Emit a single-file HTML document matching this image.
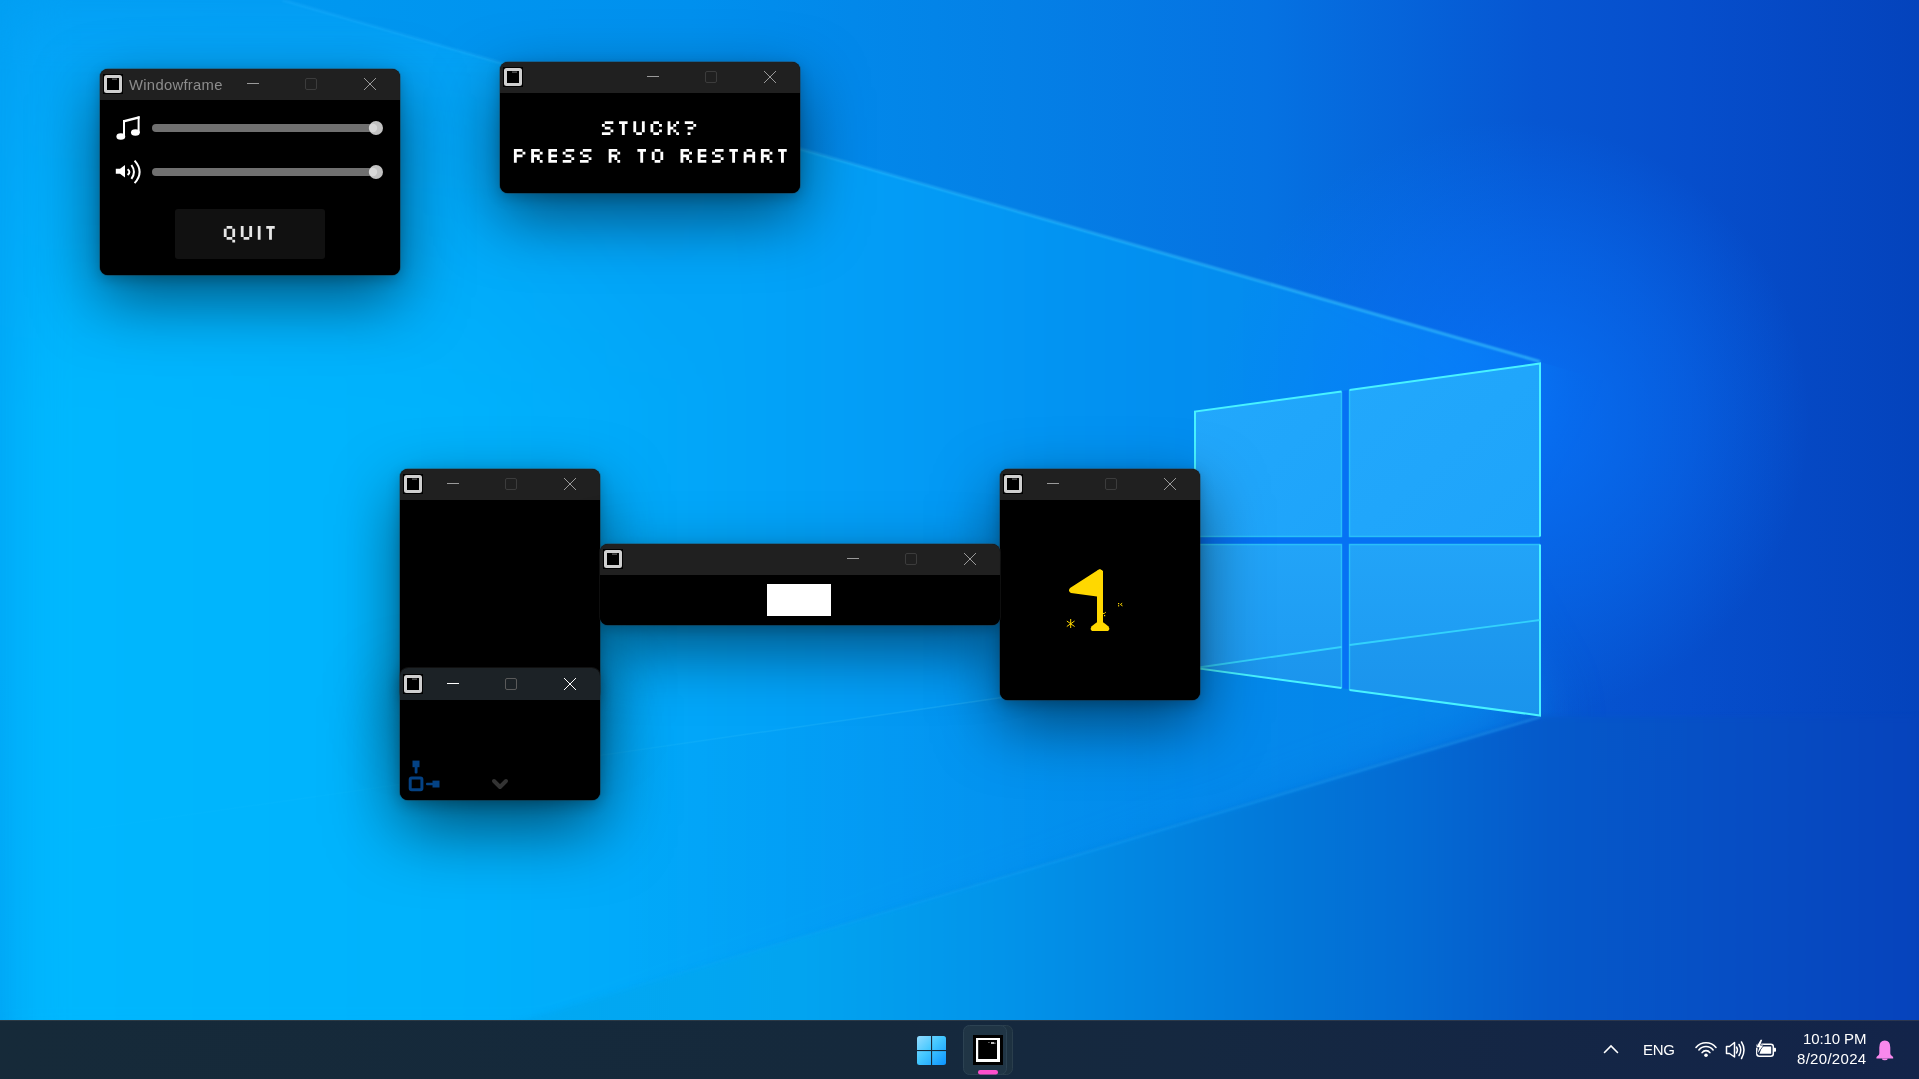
<!DOCTYPE html>
<html><head><meta charset="utf-8">
<style>
html,body{margin:0;padding:0;width:1919px;height:1079px;overflow:hidden;background:#0090e8;font-family:"Liberation Sans",sans-serif;}
.wall{position:absolute;left:0;top:0;}
.win{position:absolute;border-radius:8px;overflow:hidden;background:#000;box-shadow:0 24px 64px rgba(0,0,0,0.50),0 4px 14px rgba(0,0,0,0.22),0 0 0 1px rgba(60,60,60,0.35);}
.act{box-shadow:0 26px 70px rgba(0,0,0,0.58),0 4px 16px rgba(0,0,0,0.28),0 0 0 1px rgba(60,60,60,0.35);}
.cap{display:block;will-change:transform;}
.client{position:relative;background:#000;}
.taskbar{position:absolute;left:0;top:1020px;width:1919px;height:59px;background:linear-gradient(90deg,#162a39 0%,#15293c 45%,#152840 62%,#142645 80%,#13244a 100%);border-top:1px solid rgba(90,90,90,0.35);box-sizing:border-box;}
.tb{position:absolute;color:#fff;font-size:13.5px;white-space:nowrap;will-change:transform;}
</style></head><body>
<svg class="wall" width="1919" height="1079" viewBox="0 0 1919 1079">
<defs>
 <linearGradient id="bgx" x1="0" y1="0" x2="1919" y2="0" gradientUnits="userSpaceOnUse">
  <stop offset="0" stop-color="#009ef2"/>
  <stop offset="0.36" stop-color="#0090ee"/>
  <stop offset="0.53" stop-color="#0480e6"/>
  <stop offset="0.66" stop-color="#0572e2"/>
  <stop offset="0.80" stop-color="#0656d2"/>
  <stop offset="0.88" stop-color="#064ecc"/>
  <stop offset="1" stop-color="#0443bc"/>
 </linearGradient>
 <linearGradient id="bgy" x1="0" y1="0" x2="0" y2="1079" gradientUnits="userSpaceOnUse">
  <stop offset="0" stop-color="#0040b0" stop-opacity="0"/>
  <stop offset="0.6" stop-color="#0040b0" stop-opacity="0"/>
  <stop offset="1" stop-color="#0030a0" stop-opacity="0.05"/>
 </linearGradient>
</defs>
<rect width="1919" height="1079" fill="url(#bgx)"/>
<rect width="1919" height="1079" fill="url(#bgy)"/>
</svg>
<div class="wall" style="width:1919px;height:1079px;clip-path:polygon(282px 0px, 1540px 362px, 1919px 471px, 1919px 1079px, 0px 1079px, 0px 0px)">
<svg width="1919" height="1079" viewBox="0 0 1919 1079" style="filter:blur(30px);display:block">
<defs>
 <linearGradient id="beamtop" x1="0" y1="0" x2="0" y2="400" gradientUnits="userSpaceOnUse">
  <stop offset="0" stop-color="#0890f0" stop-opacity="0.55"/>
  <stop offset="1" stop-color="#0890f0" stop-opacity="0"/>
 </linearGradient>
 <linearGradient id="beam" x1="0" y1="0" x2="1540" y2="0" gradientUnits="userSpaceOnUse">
  <stop offset="0" stop-color="#00b8fe"/>
  <stop offset="0.3" stop-color="#00b2fc"/>
  <stop offset="0.58" stop-color="#039cf6"/>
  <stop offset="0.75" stop-color="#028ff0"/>
  <stop offset="1" stop-color="#0784ec"/>
 </linearGradient>
</defs>
<polygon points="250,-300 1545,340 1440,540 1545,725 560,1079 -300,1379 -300,-300" fill="url(#beam)"/>
<rect x="-300" y="-300" width="1000" height="700" fill="url(#beamtop)"/>
</svg>
</div>
<svg class="wall" width="1919" height="1079" viewBox="0 0 1919 1079">
<defs>
 <linearGradient id="floorC" x1="0" y1="0" x2="1919" y2="0" gradientUnits="userSpaceOnUse">
  <stop offset="0" stop-color="#00b2f8"/>
  <stop offset="0.417" stop-color="#02a4f0"/>
  <stop offset="0.521" stop-color="#0294ea"/>
  <stop offset="0.677" stop-color="#0276d8"/>
  <stop offset="0.73" stop-color="#036cd4"/>
  <stop offset="0.808" stop-color="#0559ca"/>
  <stop offset="0.9" stop-color="#064ec4"/>
  <stop offset="1" stop-color="#0643bc"/>
 </linearGradient>
 <linearGradient id="lineC" x1="1540" y1="717" x2="500" y2="1027" gradientUnits="userSpaceOnUse">
  <stop offset="0" stop-color="#40c0ff" stop-opacity="0.35"/>
  <stop offset="1" stop-color="#40c0ff" stop-opacity="0"/>
 </linearGradient>
</defs>
</svg>
<svg class="wall" width="1919" height="1079" viewBox="0 0 1919 1079" style="filter:blur(2.5px)">
<polygon points="-20,1182 1540,717 1940,717 1940,1100 -20,1100" fill="url(#floorC)"/>
</svg>
<svg class="wall" width="1919" height="1079" viewBox="0 0 1919 1079" style="filter:blur(1px)">
<line x1="1540" y1="717" x2="500" y2="1027" stroke="url(#lineC)" stroke-width="2"/>
</svg>
<svg class="wall" width="1919" height="1079" viewBox="0 0 1919 1079">
<defs>
 <radialGradient id="glow" cx="1510" cy="420" r="300" gradientUnits="userSpaceOnUse">
  <stop offset="0" stop-color="#0878ff" stop-opacity="0.75"/>
  <stop offset="0.6" stop-color="#0878ff" stop-opacity="0.35"/>
  <stop offset="1" stop-color="#0878ff" stop-opacity="0"/>
 </radialGradient>
 <linearGradient id="floor" x1="0" y1="0" x2="1540" y2="0" gradientUnits="userSpaceOnUse">
  <stop offset="0" stop-color="#0050b0" stop-opacity="0"/>
  <stop offset="0.4" stop-color="#0050b0" stop-opacity="0.0"/>
  <stop offset="0.7" stop-color="#0050b0" stop-opacity="0.07"/>
  <stop offset="1" stop-color="#0050b0" stop-opacity="0.05"/>
 </linearGradient>
 <linearGradient id="lineA" x1="280" y1="0" x2="1540" y2="364" gradientUnits="userSpaceOnUse">
  <stop offset="0" stop-color="#40c8ff" stop-opacity="0.35"/>
  <stop offset="1" stop-color="#50d8ff" stop-opacity="0.8"/>
 </linearGradient>
 <linearGradient id="lineB" x1="0" y1="842" x2="1540" y2="620" gradientUnits="userSpaceOnUse">
  <stop offset="0" stop-color="#60e0ff" stop-opacity="0.0"/>
  <stop offset="0.4" stop-color="#60e0ff" stop-opacity="0.06"/>
  <stop offset="1" stop-color="#60e0ff" stop-opacity="0.35"/>
 </linearGradient>
</defs>
<rect width="1919" height="1079" fill="url(#glow)"/>
<polygon points="0,842 1540,620 1540,717 0,1176" fill="url(#floor)"/>
</svg>
<svg class="wall" width="1919" height="1079" viewBox="0 0 1919 1079" style="filter:blur(1.2px)">
<defs>
 <linearGradient id="lineA2" x1="280" y1="0" x2="1540" y2="364" gradientUnits="userSpaceOnUse">
  <stop offset="0" stop-color="#20b0ff" stop-opacity="0.45"/>
  <stop offset="1" stop-color="#40d0ff" stop-opacity="0.8"/>
 </linearGradient>
</defs>
<line x1="282" y1="0" x2="1540" y2="361.5" stroke="url(#lineA2)" stroke-width="2.2"/>
</svg>
<svg class="wall" width="1919" height="1079" viewBox="0 0 1919 1079">
<defs>
 <linearGradient id="pane" x1="0" y1="0" x2="1" y2="1">
  <stop offset="0" stop-color="#22a8fc"/>
  <stop offset="1" stop-color="#1ea4fa"/>
 </linearGradient>
 <linearGradient id="paneB" x1="0" y1="544" x2="0" y2="716" gradientUnits="userSpaceOnUse">
  <stop offset="0" stop-color="#22a4f8"/>
  <stop offset="1" stop-color="#1c98f0"/>
 </linearGradient>
</defs>
<line x1="0" y1="842" x2="1540" y2="620" stroke="url(#lineB)" stroke-width="1.5"/>
<polygon points="1195,411.5 1540,363.5 1540,715.5 1195,668" fill="#0672f4"/>
<g fill="url(#pane)">
 <polygon points="1195,411.5 1341.5,391.5 1341.5,536.5 1195,536.5"/>
 <polygon points="1349.5,390 1540,363.5 1540,536.5 1349.5,536.5"/>
</g>
<g fill="url(#paneB)">
 <polygon points="1195,544.5 1341.5,544.5 1341.5,688 1195,668"/>
 <polygon points="1349.5,544.5 1540,544.5 1540,715.5 1349.5,690"/>
</g>
<polygon points="1195,668 1341.5,647 1341.5,688" fill="#0a60c0" opacity="0.08"/>
<polygon points="1349.5,645 1540,620 1540,715.5 1349.5,690" fill="#0a60c0" opacity="0.08"/>
<g fill="none" stroke="#30d0fa" stroke-opacity="0.75" stroke-width="1.4">
 <path d="M1341.5 391.5 V536.5 H1195 M1349.5 390 V536.5 H1540 M1195 544.5 H1341.5 V688 M1349.5 690 V544.5 H1540"/>
</g>
<g fill="none" stroke="#48f2ff" stroke-width="2" stroke-linejoin="miter">
 <path d="M1195 536.5 V411.5 L1341.5 391.5"/>
 <path d="M1349.5 390 L1540 363.5 V536.5"/>
 <path d="M1195 544.5 V668 L1341.5 688"/>
 <path d="M1540 544.5 V715.5 L1349.5 690"/>
</g>
<line x1="1195" y1="668" x2="1341.5" y2="647" stroke="#38e0ff" stroke-opacity="0.8" stroke-width="1.8"/>
<line x1="1349.5" y1="645" x2="1540" y2="620" stroke="#38e0ff" stroke-opacity="0.8" stroke-width="1.8"/>
</svg>
<div class="win" style="left:100px;top:69px;width:300px;height:206px;">
<svg class="cap" width="300" height="31" viewBox="0 0 300 31">
<rect x="0" y="0" width="300" height="31" fill="#202020"/>
<g transform="translate(0,0)">
<rect x="3" y="5" width="20" height="20" fill="#000"/>
<rect x="5.5" y="7.5" width="15" height="15" rx="1" fill="none" stroke="#cfcfcf" stroke-width="3"/>
<rect x="12" y="9.6" width="5" height="1" fill="#777"/>
<line x1="147" y1="14.5" x2="159" y2="14.5" stroke="#9a9a9a" stroke-width="1"/>
<rect x="205.5" y="9.5" width="11" height="11" rx="1.5" fill="none" stroke="#3c3c3c" stroke-width="1"/>
<path d="M264 9 L276 21 M276 9 L264 21" stroke="#9a9a9a" stroke-width="1"/>
</g><text x="29" y="20.8" font-family="Liberation Sans, sans-serif" font-size="14.8" letter-spacing="0.3" fill="#8c8c8c">Windowframe</text></svg>
<div class="client" style="height:175px"><svg width="300" height="175" viewBox="0 0 300 175" style="position:absolute;left:0;top:0">
<g fill="#fff">
 <ellipse cx="20.8" cy="36.5" rx="4.4" ry="3.3"/>
 <ellipse cx="35.4" cy="32.5" rx="4.4" ry="3.3"/>
 <rect x="23" y="20" width="2" height="16"/>
 <rect x="37.6" y="16.5" width="2" height="16.5"/>
 <polygon points="23,20.2 39.6,16 39.6,18.6 23,22.8"/>
 <polygon points="15.8,68.8 20,68.8 25,65 25,77.5 20,73.8 15.8,73.8"/>
</g>
<g fill="none" stroke="#fff" stroke-width="2">
 <path d="M27.6 69.2 Q31.2 72 27.6 75"/>
 <path d="M31.4 65 Q36.5 71.9 31.4 78.8"/>
 <path d="M34.6 60.6 Q44.6 71.9 34.6 83.2"/>
</g>
<rect x="52" y="24" width="226" height="8" rx="4" fill="#707070"/>
<rect x="52" y="68" width="226" height="8" rx="4" fill="#707070"/>
<circle cx="276" cy="28" r="7" fill="#c2c2c2"/>
<circle cx="273" cy="28" r="4.2" fill="#d8d8d8"/>
<circle cx="276" cy="72" r="7" fill="#c2c2c2"/>
<circle cx="273" cy="72" r="4.2" fill="#d8d8d8"/>
<rect x="75" y="109" width="150" height="50" rx="3" fill="#111111"/>
<path fill="#e6e6e6" d="M126.63 126.00H132.29V128.77H126.63ZM123.80 128.77H126.63V131.54H123.80ZM132.29 128.77H135.12V131.54H132.29ZM123.80 131.54H126.63V134.31H123.80ZM132.29 131.54H135.12V134.31H132.29ZM123.80 134.31H126.63V137.08H123.80ZM132.29 134.31H135.12V137.08H132.29ZM126.63 137.08H132.29V139.85H126.63ZM132.29 139.85H135.12V142.62H132.29ZM140.78 126.00H143.61V128.77H140.78ZM149.27 126.00H152.10V128.77H149.27ZM140.78 128.77H143.61V131.54H140.78ZM149.27 128.77H152.10V131.54H149.27ZM140.78 131.54H143.61V134.31H140.78ZM149.27 131.54H152.10V134.31H149.27ZM140.78 134.31H143.61V137.08H140.78ZM149.27 134.31H152.10V137.08H149.27ZM143.61 137.08H149.27V139.85H143.61ZM157.76 126.00H160.59V128.77H157.76ZM157.76 128.77H160.59V131.54H157.76ZM157.76 131.54H160.59V134.31H157.76ZM157.76 134.31H160.59V137.08H157.76ZM157.76 137.08H160.59V139.85H157.76ZM166.25 126.00H174.74V128.77H166.25ZM169.08 128.77H171.91V131.54H169.08ZM169.08 131.54H171.91V134.31H169.08ZM169.08 134.31H171.91V137.08H169.08ZM169.08 137.08H171.91V139.85H169.08Z"/>
</svg></div>
</div>
<div class="win" style="left:500px;top:62px;width:300px;height:131px;">
<svg class="cap" width="300" height="31" viewBox="0 0 300 31">
<rect x="0" y="0" width="300" height="31" fill="#202020"/>
<g transform="translate(0,0)">
<rect x="3" y="5" width="20" height="20" fill="#000"/>
<rect x="5.5" y="7.5" width="15" height="15" rx="1" fill="none" stroke="#cfcfcf" stroke-width="3"/>
<rect x="12" y="9.6" width="5" height="1" fill="#777"/>
<line x1="147" y1="14.5" x2="159" y2="14.5" stroke="#9a9a9a" stroke-width="1"/>
<rect x="205.5" y="9.5" width="11" height="11" rx="1.5" fill="none" stroke="#3c3c3c" stroke-width="1"/>
<path d="M264 9 L276 21 M276 9 L264 21" stroke="#9a9a9a" stroke-width="1"/>
</g></svg>
<div class="client" style="height:100px"><svg width="300" height="100" viewBox="0 0 300 100" style="position:absolute;left:0;top:0">
<path fill="#ffffff" d="M104.76 28.20H113.33V30.97H104.76ZM101.90 30.97H104.76V33.74H101.90ZM104.76 33.74H110.47V36.51H104.76ZM110.47 36.51H113.33V39.28H110.47ZM101.90 39.28H110.47V42.05H101.90ZM119.04 28.20H127.61V30.97H119.04ZM121.90 30.97H124.76V33.74H121.90ZM121.90 33.74H124.76V36.51H121.90ZM121.90 36.51H124.76V39.28H121.90ZM121.90 39.28H124.76V42.05H121.90ZM133.33 28.20H136.18V30.97H133.33ZM141.90 28.20H144.75V30.97H141.90ZM133.33 30.97H136.18V33.74H133.33ZM141.90 30.97H144.75V33.74H141.90ZM133.33 33.74H136.18V36.51H133.33ZM141.90 33.74H144.75V36.51H141.90ZM133.33 36.51H136.18V39.28H133.33ZM141.90 36.51H144.75V39.28H141.90ZM136.18 39.28H141.90V42.05H136.18ZM153.33 28.20H159.04V30.97H153.33ZM150.47 30.97H153.33V33.74H150.47ZM159.04 30.97H161.90V33.74H159.04ZM150.47 33.74H153.33V36.51H150.47ZM150.47 36.51H153.33V39.28H150.47ZM159.04 36.51H161.90V39.28H159.04ZM153.33 39.28H159.04V42.05H153.33ZM167.61 28.20H170.47V30.97H167.61ZM176.18 28.20H179.04V30.97H176.18ZM167.61 30.97H170.47V33.74H167.61ZM173.33 30.97H176.18V33.74H173.33ZM167.61 33.74H173.33V36.51H167.61ZM167.61 36.51H170.47V39.28H167.61ZM173.33 36.51H176.18V39.28H173.33ZM167.61 39.28H170.47V42.05H167.61ZM176.18 39.28H179.04V42.05H176.18ZM184.75 28.20H193.32V30.97H184.75ZM193.32 30.97H196.18V33.74H193.32ZM187.61 33.74H193.32V36.51H187.61ZM187.61 39.28H190.47V42.05H187.61Z"/>
<path fill="#ffffff" d="M13.90 56.00H22.52V58.77H13.90ZM13.90 58.77H16.77V61.54H13.90ZM22.52 58.77H25.39V61.54H22.52ZM13.90 61.54H22.52V64.31H13.90ZM13.90 64.31H16.77V67.08H13.90ZM13.90 67.08H16.77V69.85H13.90ZM31.13 56.00H39.75V58.77H31.13ZM31.13 58.77H34.00V61.54H31.13ZM39.75 58.77H42.62V61.54H39.75ZM31.13 61.54H39.75V64.31H31.13ZM31.13 64.31H34.00V67.08H31.13ZM36.88 64.31H39.75V67.08H36.88ZM31.13 67.08H34.00V69.85H31.13ZM39.75 67.08H42.62V69.85H39.75ZM48.36 56.00H56.98V58.77H48.36ZM48.36 58.77H51.24V61.54H48.36ZM48.36 61.54H56.98V64.31H48.36ZM48.36 64.31H51.24V67.08H48.36ZM48.36 67.08H56.98V69.85H48.36ZM65.60 56.00H74.21V58.77H65.60ZM62.72 58.77H65.60V61.54H62.72ZM65.60 61.54H71.34V64.31H65.60ZM71.34 64.31H74.21V67.08H71.34ZM62.72 67.08H71.34V69.85H62.72ZM82.83 56.00H91.44V58.77H82.83ZM79.96 58.77H82.83V61.54H79.96ZM82.83 61.54H88.57V64.31H82.83ZM88.57 64.31H91.44V67.08H88.57ZM79.96 67.08H88.57V69.85H79.96ZM108.68 56.00H117.29V58.77H108.68ZM108.68 58.77H111.55V61.54H108.68ZM117.29 58.77H120.16V61.54H117.29ZM108.68 61.54H117.29V64.31H108.68ZM108.68 64.31H111.55V67.08H108.68ZM114.42 64.31H117.29V67.08H114.42ZM108.68 67.08H111.55V69.85H108.68ZM117.29 67.08H120.16V69.85H117.29ZM137.40 56.00H146.01V58.77H137.40ZM140.27 58.77H143.14V61.54H140.27ZM140.27 61.54H143.14V64.31H140.27ZM140.27 64.31H143.14V67.08H140.27ZM140.27 67.08H143.14V69.85H140.27ZM154.63 56.00H160.37V58.77H154.63ZM151.76 58.77H154.63V61.54H151.76ZM160.37 58.77H163.24V61.54H160.37ZM151.76 61.54H154.63V64.31H151.76ZM160.37 61.54H163.24V64.31H160.37ZM151.76 64.31H154.63V67.08H151.76ZM160.37 64.31H163.24V67.08H160.37ZM154.63 67.08H160.37V69.85H154.63ZM180.48 56.00H189.09V58.77H180.48ZM180.48 58.77H183.35V61.54H180.48ZM189.09 58.77H191.96V61.54H189.09ZM180.48 61.54H189.09V64.31H180.48ZM180.48 64.31H183.35V67.08H180.48ZM186.22 64.31H189.09V67.08H186.22ZM180.48 67.08H183.35V69.85H180.48ZM189.09 67.08H191.96V69.85H189.09ZM197.71 56.00H206.32V58.77H197.71ZM197.71 58.77H200.58V61.54H197.71ZM197.71 61.54H206.32V64.31H197.71ZM197.71 64.31H200.58V67.08H197.71ZM197.71 67.08H206.32V69.85H197.71ZM214.94 56.00H223.56V58.77H214.94ZM212.07 58.77H214.94V61.54H212.07ZM214.94 61.54H220.68V64.31H214.94ZM220.68 64.31H223.56V67.08H220.68ZM212.07 67.08H220.68V69.85H212.07ZM229.30 56.00H237.92V58.77H229.30ZM232.17 58.77H235.04V61.54H232.17ZM232.17 61.54H235.04V64.31H232.17ZM232.17 64.31H235.04V67.08H232.17ZM232.17 67.08H235.04V69.85H232.17ZM246.53 56.00H252.28V58.77H246.53ZM243.66 58.77H246.53V61.54H243.66ZM252.28 58.77H255.15V61.54H252.28ZM243.66 61.54H255.15V64.31H243.66ZM243.66 64.31H246.53V67.08H243.66ZM252.28 64.31H255.15V67.08H252.28ZM243.66 67.08H246.53V69.85H243.66ZM252.28 67.08H255.15V69.85H252.28ZM260.89 56.00H269.51V58.77H260.89ZM260.89 58.77H263.76V61.54H260.89ZM269.51 58.77H272.38V61.54H269.51ZM260.89 61.54H269.51V64.31H260.89ZM260.89 64.31H263.76V67.08H260.89ZM266.64 64.31H269.51V67.08H266.64ZM260.89 67.08H263.76V69.85H260.89ZM269.51 67.08H272.38V69.85H269.51ZM278.12 56.00H286.74V58.77H278.12ZM281.00 58.77H283.87V61.54H281.00ZM281.00 61.54H283.87V64.31H281.00ZM281.00 64.31H283.87V67.08H281.00ZM281.00 67.08H283.87V69.85H281.00Z"/>
</svg></div>
</div>
<div class="win" style="left:400px;top:469px;width:200px;height:231px;">
<svg class="cap" width="200" height="31" viewBox="0 0 200 31">
<rect x="0" y="0" width="200" height="31" fill="#202020"/>
<g transform="translate(0,0)">
<rect x="3" y="5" width="20" height="20" fill="#000"/>
<rect x="5.5" y="7.5" width="15" height="15" rx="1" fill="none" stroke="#cfcfcf" stroke-width="3"/>
<rect x="12" y="9.6" width="5" height="1" fill="#777"/>
<line x1="47" y1="14.5" x2="59" y2="14.5" stroke="#9a9a9a" stroke-width="1"/>
<rect x="105.5" y="9.5" width="11" height="11" rx="1.5" fill="none" stroke="#3c3c3c" stroke-width="1"/>
<path d="M164 9 L176 21 M176 9 L164 21" stroke="#9a9a9a" stroke-width="1"/>
</g></svg>
<div class="client" style="height:200px"></div>
</div>
<div class="win" style="left:1000px;top:469px;width:200px;height:231px;">
<svg class="cap" width="200" height="31" viewBox="0 0 200 31">
<rect x="0" y="0" width="200" height="31" fill="#202020"/>
<g transform="translate(0,0)">
<rect x="3" y="5" width="20" height="20" fill="#000"/>
<rect x="5.5" y="7.5" width="15" height="15" rx="1" fill="none" stroke="#cfcfcf" stroke-width="3"/>
<rect x="12" y="9.6" width="5" height="1" fill="#777"/>
<line x1="47" y1="14.5" x2="59" y2="14.5" stroke="#9a9a9a" stroke-width="1"/>
<rect x="105.5" y="9.5" width="11" height="11" rx="1.5" fill="none" stroke="#3c3c3c" stroke-width="1"/>
<path d="M164 9 L176 21 M176 9 L164 21" stroke="#9a9a9a" stroke-width="1"/>
</g></svg>
<div class="client" style="height:200px"><svg width="200" height="200" viewBox="0 0 200 200" style="position:absolute;left:0;top:0">
<g fill="#ffd800">
 <path d="M97 71 Q100 68 103 71 L103 124 L97 124 Z"/>
 <path d="M70 88 Q67.5 91 71 93 L97 96.5 L103 72 Q101 68 98 70 Z"/>
 <path d="M96.5 122.6 L103.5 122.6 L108.6 126.6 Q110 128.8 108.6 130.4 Q108 130.9 106.5 130.9 L93.5 130.9 Q92 130.9 91.4 130.4 Q90 128.8 91.4 126.6 Z"/>
 <rect x="118" y="103" width="1.2" height="1.2"/>
 <rect x="118" y="105.2" width="1.2" height="1.2"/>
 <rect x="104" y="115" width="1.2" height="1.2"/>
</g>
<g stroke="#ffd800" stroke-width="1" fill="none">
 <path d="M70.7 119 L70.7 128 M66.8 121 L74.6 126.5 M66.8 126.5 L74.6 121"/>
 <path d="M122.2 103.2 L120.4 104.5 L122.5 105.9"/>
 <path d="M102.6 113.6 L104.5 113.3 L105.8 112.2"/>
</g>
</svg></div>
</div>
<div class="win" style="left:600px;top:544px;width:400px;height:81px;">
<svg class="cap" width="400" height="31" viewBox="0 0 400 31">
<rect x="0" y="0" width="400" height="31" fill="#202020"/>
<g transform="translate(0,0)">
<rect x="3" y="5" width="20" height="20" fill="#000"/>
<rect x="5.5" y="7.5" width="15" height="15" rx="1" fill="none" stroke="#cfcfcf" stroke-width="3"/>
<rect x="12" y="9.6" width="5" height="1" fill="#777"/>
<line x1="247" y1="14.5" x2="259" y2="14.5" stroke="#9a9a9a" stroke-width="1"/>
<rect x="305.5" y="9.5" width="11" height="11" rx="1.5" fill="none" stroke="#3c3c3c" stroke-width="1"/>
<path d="M364 9 L376 21 M376 9 L364 21" stroke="#9a9a9a" stroke-width="1"/>
</g></svg>
<div class="client" style="height:50px"><div style="position:absolute;left:167px;top:9px;width:64px;height:32px;background:#fff"></div></div>
</div>
<div class="win act" style="left:400px;top:668px;width:200px;height:132px;">
<svg class="cap" width="200" height="32" viewBox="0 0 200 32">
<rect x="0" y="0" width="200" height="32" fill="#1c2226"/>
<g transform="translate(0,1)">
<rect x="3" y="5" width="20" height="20" fill="#000"/>
<rect x="5.5" y="7.5" width="15" height="15" rx="1" fill="none" stroke="#cfcfcf" stroke-width="3"/>
<rect x="12" y="9.6" width="5" height="1" fill="#777"/>
<line x1="47" y1="14.5" x2="59" y2="14.5" stroke="#ffffff" stroke-width="1"/>
<rect x="105.5" y="9.5" width="11" height="11" rx="1.5" fill="none" stroke="#5a5a5a" stroke-width="1"/>
<path d="M164 9 L176 21 M176 9 L164 21" stroke="#ffffff" stroke-width="1"/>
</g></svg>
<div class="client" style="height:100px"><svg width="200" height="100" viewBox="0 0 200 100" style="position:absolute;left:0;top:0">
<g fill="#044284">
 <rect x="12.5" y="60.6" width="7" height="6.6"/>
 <rect x="14.7" y="66" width="2.8" height="7.5" rx="1"/>
 <rect x="32.5" y="80.6" width="7" height="6.9"/>
 <rect x="26" y="82.8" width="7.5" height="2.5" rx="1"/>
</g>
<rect x="10.2" y="78.1" width="11.7" height="11.7" rx="1.5" fill="none" stroke="#044284" stroke-width="3"/>
<path d="M94 81 L100 87 L106 81" fill="none" stroke="#333" stroke-width="4" stroke-linecap="round" stroke-linejoin="round"/>
</svg></div>
</div>
<div class="taskbar">
 <svg width="1919" height="59" viewBox="0 0 1919 59" style="position:absolute;left:0;top:-1px">
  <defs>
   <linearGradient id="wl" x1="917" y1="16" x2="946" y2="45" gradientUnits="userSpaceOnUse">
    <stop offset="0" stop-color="#94dcff"/><stop offset="0.45" stop-color="#44c8ff"/><stop offset="1" stop-color="#0c94ff"/>
   </linearGradient>
  </defs>
  <rect x="917" y="16" width="29" height="29" rx="2.5" fill="url(#wl)"/>
  <rect x="931" y="16" width="1.1" height="29" fill="#162a3a"/>
  <rect x="917" y="30" width="29" height="1.1" fill="#162a3a"/>
  <rect x="996.5" y="5.5" width="16" height="49" rx="6" fill="#1d3140" stroke="#2a3e4c" stroke-width="1"/>
  <rect x="963.5" y="5.5" width="43" height="49" rx="6" fill="#203545" stroke="#2c4252" stroke-width="1"/>
  <rect x="973" y="15" width="30" height="30" fill="#000"/>
  <rect x="976" y="18" width="24" height="24" fill="#fff"/>
  <rect x="978.2" y="20" width="18.8" height="19" fill="#000"/>
  <rect x="991" y="22.2" width="3" height="1.6" fill="#eee"/>
  <rect x="988.5" y="22" width="0.9" height="0.9" fill="#ccc"/>
  <rect x="994.3" y="22.6" width="1.2" height="1.2" fill="#bbb"/>
  <rect x="978" y="50" width="20" height="4.5" rx="2.25" fill="#ff4fcc"/>
  <path d="M1604.5 32.5 L1611 26 L1617.5 32.5" stroke-linecap="round" fill="none" stroke="#fff" stroke-width="1.6"/>
  <g fill="none" stroke="#fff" stroke-width="1.6" stroke-linecap="round">
   <path d="M1696 1047.4 A13 13 0 0 1 1716 1047.4" transform="translate(0,-1020)"/>
   <path d="M1698.9 1049.9 A9 9 0 0 1 1713.1 1049.9" transform="translate(0,-1020)"/>
   <path d="M1702.1 1052.6 A4.8 4.8 0 0 1 1709.9 1052.6" transform="translate(0,-1020)"/>
  </g>
  <circle cx="1706" cy="35.2" r="1.8" fill="#fff"/>
  <path d="M1726.5 26.5 L1729.5 26.5 L1734.5 22.5 L1734.5 37 L1729.5 33.5 L1726.5 33.5 Z" fill="none" stroke="#fff" stroke-width="1.5" stroke-linejoin="round"/>
  <g fill="none" stroke="#fff" stroke-width="1.5" stroke-linecap="round">
   <path d="M1736.5 27 Q1738.5 30 1736.5 33"/>
   <path d="M1739 24.5 Q1742.5 30 1739 35.5"/>
   <path d="M1741.5 22 Q1746.5 30 1741.5 38.5"/>
  </g>
  <rect x="1756.8" y="24.3" width="16.5" height="12" rx="2.5" fill="none" stroke="#fff" stroke-width="1.5"/>
  <rect x="1773.5" y="27.8" width="2.5" height="4" rx="0.8" fill="#fff"/>
  <polygon points="1759.5,33.8 1762,26.4 1771.2,26.4 1771.2,33.8" fill="#fff"/>
  <path d="M1760.6 19.8 L1756.3 27.2 L1759.4 27.2 L1757.6 33.2 L1763.2 25.4 L1760.1 25.4 L1762.2 19.8 Z" fill="#fff" stroke="#14264a" stroke-width="1.2" stroke-linejoin="round" paint-order="stroke"/>
  <path d="M1884.8 20.6 Q1879.3 20.6 1879.3 27.5 L1879.3 33.5 Q1879.3 35 1877.2 36.2 Q1876.4 36.8 1876.4 37.6 L1876.4 38.4 L1893.2 38.4 L1893.2 37.6 Q1893.2 36.8 1892.4 36.2 Q1890.3 35 1890.3 33.5 L1890.3 27.5 Q1890.3 20.6 1884.8 20.6 Z" fill="#f888ec"/>
  <path d="M1882 38.5 L1887.6 38.5 L1887.6 39 Q1887.6 40.3 1884.8 40.3 Q1882 40.3 1882 39 Z" fill="#f888ec"/>
 </svg>
 <div class="tb" style="left:1643px;top:20px;font-size:15px;letter-spacing:-0.3px;">ENG</div>
 <div class="tb" style="right:53px;top:9px;font-size:15px;letter-spacing:-0.1px;">10:10 PM</div>
 <div class="tb" style="right:53px;top:29px;font-size:15px;letter-spacing:0.3px;">8/20/2024</div>
</div>
</body></html>
